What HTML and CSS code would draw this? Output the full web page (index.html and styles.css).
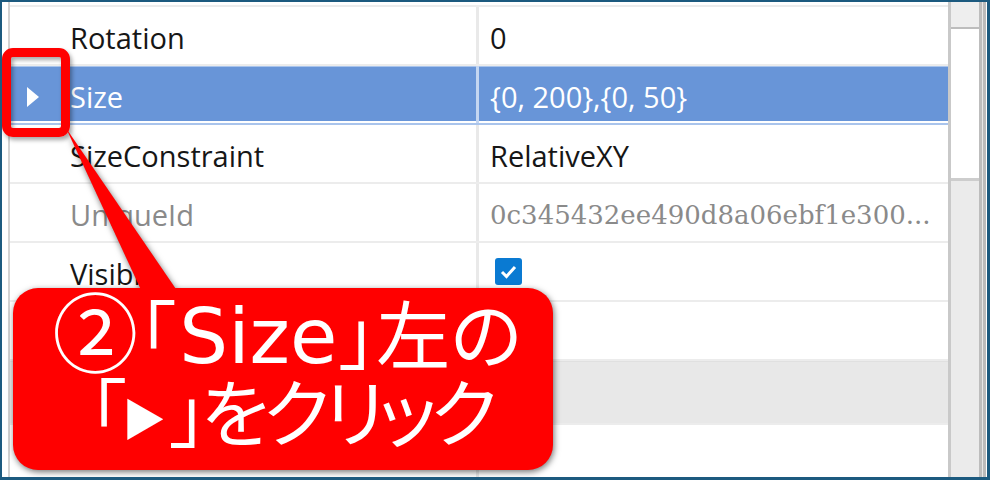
FILE: index.html
```html
<!DOCTYPE html>
<html lang="ja">
<head>
  <meta charset="UTF-8">
  <meta name="viewport" content="width=device-width, initial-scale=1.0">
  <title>Properties</title>
  <link rel="stylesheet" href="styles.css">
</head>
<body>
  <div class="window">
    <div class="margin"></div>

    <div class="grid">
      <div class="row stub"></div>
      <div class="row">
        <div class="name"><span class="toggle"></span>Rotation</div>
        <div class="value">0</div>
      </div>
      <div class="row selected">
        <div class="name">
          <svg class="toggle" viewBox="0 0 12 20"><polygon points="0,0 12,10 0,20" fill="#fff"/></svg>Size
        </div>
        <div class="value">{0, 200},{0, 50}</div>
      </div>
      <div class="row">
        <div class="name"><span class="toggle"></span>SizeConstraint</div>
        <div class="value">RelativeXY</div>
      </div>
      <div class="row disabled">
        <div class="name"><span class="toggle"></span>UniqueId</div>
        <div class="value id">0c345432ee490d8a06ebf1e300...</div>
      </div>
      <div class="row">
        <div class="name"><span class="toggle"></span>Visible</div>
        <div class="value">
          <svg class="check" viewBox="0 0 27 27">
            <rect x="0" y="0" width="27" height="27" rx="3" fill="#0a7ad2"/>
            <polyline points="7,14 11.5,18.5 20,9" fill="none" stroke="#fff" stroke-width="3"/>
          </svg>
        </div>
      </div>
      <div class="row">
        <div class="name"></div>
        <div class="value"></div>
      </div>
      <div class="row category"></div>
      <div class="row">
        <div class="name"></div>
        <div class="value"></div>
      </div>
    </div>

    <div class="scrollbar">
      <div class="scroll-cap"></div>
      <div class="thumb"></div>
      <div class="track"></div>
    </div>
    <div class="edge"></div>

    <!-- annotation -->
    <div class="highlight"></div>
    <div class="callout">
      <svg class="pointer" viewBox="0 0 140 170"><polygon points="13,2 89,166 125,166" fill="#ff0000"/></svg>
      <div class="bubble">
        <p class="line-1"><span class="num">②</span>「<span class="latin">Size</span>」左の</p>
        <p class="line-2">「<span class="tri">▶</span>」をクリック</p>
      </div>
    </div>
  </div>
</body>
</html>
```

FILE: styles.css
```css
body {
  margin: 0;
  font-family: "Open Sans", "Liberation Sans", sans-serif;
  background-color: #ffffff;
}
.window {
  position: relative;
  display: flex;
  width: 990px;
  height: 480px;
  box-sizing: border-box;
  border: 2px solid #1c5a7f;
  border-right-width: 3px;
  border-bottom-width: 3px;
  background-color: #ffffff;
  overflow: hidden;
}
.margin {
  width: 6px;
}
.grid {
  flex: 1;
  border-left: 2px solid #d3d3d3;
  overflow: hidden;
}
.row {
  display: grid;
  grid-template-columns: 469px 1fr;
  height: 57px;
  border-bottom: 2px solid #ececec;
  font-size: 29px;
  color: #161616;
}
.row.stub {
  height: 3px;
}
.name {
  display: flex;
  align-items: center;
  padding: 4px 0 0 17px;
  border-right: 3px solid #e9e9e9;
}
.toggle {
  width: 12px;
  height: 20px;
  margin-right: 31px;
  flex-shrink: 0;
}
.value {
  display: flex;
  align-items: center;
  padding: 4px 0 0 11px;
}
.row.selected {
  background-color: #6895d8;
  color: #ffffff;
  border-bottom-color: #a9c4ec;
  box-shadow: inset 0 1px 0 #a9c4ec, inset 0 -2px 0 #ffffff;
}
.row.selected .name {
  border-right-color: #c4d6f1;
}
.row.disabled {
  color: #8a8a8a;
}
.value.id {
  font-family: "DejaVu Serif", serif;
  font-size: 26px;
  white-space: nowrap;
}
.check {
  width: 27px;
  height: 27px;
  margin: 0 0 4px 5px;
}
.row.category {
  display: block;
  height: 61px;
  background-color: #e8e8e8;
  border-top: 1px solid #e0e0e0;
}
.scrollbar {
  display: flex;
  flex-direction: column;
  width: 28px;
  border-left: 3px solid #c9c9c9;
  border-right: 3px solid #bdbdbd;
}
.scroll-cap {
  height: 25px;
  background-color: #eeeeee;
  border-bottom: 2px solid #bdbdbd;
}
.thumb {
  height: 149px;
  background-color: #ffffff;
  border-bottom: 3px solid #cdcdcd;
}
.track {
  flex: 1;
  background-color: #ebebeb;
}
.edge {
  width: 3px;
  border-left: 1px solid #e6e6e6;
  border-right: 1px solid #ffffff;
  background-color: #bbbbbb;
}
.highlight {
  position: absolute;
  left: 0;
  top: 46px;
  width: 68px;
  height: 89px;
  box-sizing: border-box;
  border: 9px solid #ff0000;
  border-radius: 11px;
  box-shadow: 2px 3px 4px rgba(0, 0, 0, 0.35), inset 2px 3px 4px rgba(0, 0, 0, 0.35);
}
.callout {
  position: absolute;
  left: 11px;
  top: 286px;
  width: 540px;
  height: 182px;
  filter: drop-shadow(1px 2px 3px rgba(0, 0, 0, 0.55));
}
.pointer {
  position: absolute;
  left: 40px;
  top: -162px;
  width: 140px;
  height: 170px;
}
.bubble {
  position: relative;
  display: flex;
  flex-direction: column;
  justify-content: center;
  height: 100%;
  box-sizing: border-box;
  padding-bottom: 18px;
  border-radius: 25px;
  background-color: #ff0000;
}
.bubble p {
  margin: 0;
  color: #ffffff;
  font-family: "Noto Sans CJK JP", sans-serif;
  font-size: 74px;
  text-align: center;
  font-feature-settings: "palt";
  white-space: nowrap;
}
.line-1 {
  height: 78px;
  line-height: 78px;
  padding-left: 8px;
}
.line-2 {
  height: 78px;
  line-height: 78px;
  letter-spacing: -6px;
  padding-left: 14px;
}
.bubble .num {
  display: inline-block;
  font-size: 86px;
  line-height: 60px;
  vertical-align: -3px;
}
.bubble .latin {
  display: inline-block;
  font-family: "DejaVu Sans", sans-serif;
  font-size: 77px;
  line-height: 60px;
  margin: 0 2px 0 4px;
}
.bubble .tri {
  display: inline-block;
  font-size: 44px;
  line-height: 40px;
  vertical-align: 5px;
  letter-spacing: 0;
  margin: 0 4px 0 2px;
}
```
